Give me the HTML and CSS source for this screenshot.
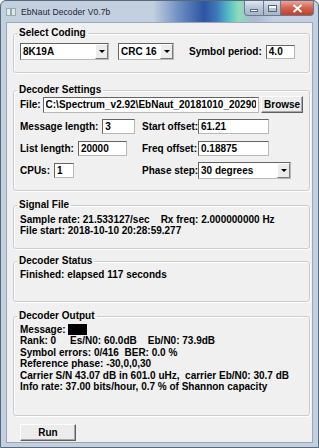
FILE: index.html
```html
<!DOCTYPE html>
<html lang="en">
<head>
    <meta charset="UTF-8">
    <title>EbNaut Decoder V0.7b</title>
    <link rel="stylesheet" href="styles.css">
</head>
<body>
    <div class="window">
        <div class="titlebar">
            <span class="app-icon"></span>
            <span class="title">EbNaut Decoder V0.7b</span>
            <div class="caption-buttons">
                <span class="cap cap-min"><span class="min-bar"></span></span>
                <span class="cap cap-max"><span class="max-box"></span></span>
                <span class="cap cap-close">
                    <svg width="11" height="9" viewBox="0 0 11 9">
                        <path d="M1.5 1 L9.5 8 M9.5 1 L1.5 8" stroke="#fff" stroke-width="2" fill="none"/>
                    </svg>
                </span>
            </div>
        </div>

        <div class="client">
            <fieldset class="group group-coding">
                <legend>Select Coding</legend>
                <div class="row">
                    <div class="combo combo-code"><span class="combo-text">8K19A</span><span class="combo-btn"></span></div>
                    <div class="combo combo-crc"><span class="combo-text">CRC 16</span><span class="combo-btn"></span></div>
                    <span class="label label-symbol">Symbol period:</span>
                    <input class="field field-symbol" type="text" value="4.0" readonly>
                </div>
            </fieldset>

            <fieldset class="group group-settings">
                <legend>Decoder Settings</legend>
                <div class="row">
                    <span class="label">File:</span>
                    <input class="field field-file" type="text" value="C:\Spectrum_v2.92\EbNaut_20181010_202900.vlf" readonly>
                    <button class="btn btn-browse">Browse</button>
                </div>
                <div class="row">
                    <div class="left-col">
                        <span class="label">Message length:</span>
                        <input class="field field-msg" type="text" value="3" readonly>
                    </div>
                    <span class="label right-label">Start offset:</span>
                    <input class="field field-right" type="text" value="61.21" readonly>
                </div>
                <div class="row">
                    <div class="left-col">
                        <span class="label">List length:</span>
                        <input class="field field-list" type="text" value="20000" readonly>
                    </div>
                    <span class="label right-label">Freq offset:</span>
                    <input class="field field-right" type="text" value="0.18875" readonly>
                </div>
                <div class="row">
                    <div class="left-col">
                        <span class="label">CPUs:</span>
                        <input class="field field-cpu" type="text" value="1" readonly>
                    </div>
                    <span class="label right-label">Phase step:</span>
                    <div class="combo combo-phase"><span class="combo-text">30 degrees</span><span class="combo-btn"></span></div>
                </div>
            </fieldset>

            <fieldset class="group group-signal">
                <legend>Signal File</legend>
                <div class="text-line">Sample rate: 21.533127/sec    Rx freq: 2.000000000 Hz</div>
                <div class="text-line">File start: 2018-10-10 20:28:59.277</div>
            </fieldset>

            <fieldset class="group group-status">
                <legend>Decoder Status</legend>
                <div class="text-line">Finished: elapsed 117 seconds</div>
            </fieldset>

            <fieldset class="group group-output">
                <legend>Decoder Output</legend>
                <div class="text-line">Message: <span class="redacted"></span></div>
                <div class="text-line">Rank: 0     Es/N0: 60.0dB    Eb/N0: 73.9dB</div>
                <div class="text-line">Symbol errors: 0/416  BER: 0.0 %</div>
                <div class="text-line">Reference phase: -30,0,0,30</div>
                <div class="text-line">Carrier S/N 43.07 dB in 601.0 uHz,  carrier Eb/N0: 30.7 dB</div>
                <div class="text-line">Info rate: 37.00 bits/hour, 0.7 % of Shannon capacity</div>
            </fieldset>

            <button class="btn btn-run">Run</button>
        </div>
    </div>
</body>
</html>
```

FILE: styles.css
```css
* {
    margin: 0;
    padding: 0;
    box-sizing: border-box;
}

body {
    width: 319px;
    height: 448px;
    overflow: hidden;
    background: #fff;
    font-family: "Liberation Sans", Arial, sans-serif;
    font-size: 10px;
    font-weight: bold;
    color: #000;
}

/* window frame */
.window {
    width: 319px;
    height: 448px;
    display: flex;
    flex-direction: column;
    padding: 0 5px 4px 5px;
    border: 1px solid #59687a;
    border-radius: 6px 6px 0 0;
    background:
        linear-gradient(90deg, rgba(205, 216, 230, 0) 0%, rgba(205, 216, 230, 0) 48%, #6f8fc2 56%, #2d55a3 64%, #3f78b8 68%, #55c0c8 72%, #8fdcb8 75%, #a9b8d3 80%, rgba(190, 205, 222, 0) 86%) top / 100% 22px no-repeat,
        #c2d0df;
}

.titlebar {
    height: 21px;
    display: flex;
    align-items: center;
    flex-shrink: 0;
}

.app-icon {
    width: 10px;
    height: 8px;
    margin-left: 0;
    margin-top: 1px;
    background: linear-gradient(90deg, #e4eef0 0%, #e4eef0 40%, #8db0a0 40%, #8db0a0 60%, #dce8e4 60%);
    border: 1px solid #9aa9b0;
}

.title {
    margin-left: 5px;
    margin-top: 1px;
    font-size: 8.5px;
    font-weight: normal;
    color: #1c2430;
    letter-spacing: 0.1px;
}

.caption-buttons {
    margin-left: auto;
    align-self: flex-start;
    display: flex;
    height: 15px;
    margin-right: -1px;
}

.cap {
    display: flex;
    align-items: center;
    justify-content: center;
    height: 15px;
    border: 1px solid #6a7890;
    border-top: none;
}

.cap-min {
    width: 20px;
    border-radius: 0 0 0 4px;
    background: linear-gradient(#dfe6f0, #b9c6d8 50%, #a7b6cc);
}

.cap-max {
    width: 17px;
    border-left: none;
    background: linear-gradient(#dfe6f0, #b9c6d8 50%, #a7b6cc);
}

.cap-close {
    width: 33px;
    border-left: none;
    border-radius: 0 0 4px 0;
    background: linear-gradient(#e8a89a, #d2624e 50%, #c2402c);
}

.min-bar {
    width: 8px;
    height: 3px;
    margin-top: 5px;
    background: #fff;
    border: 1px solid #5a6678;
}

.max-box {
    width: 9px;
    height: 7px;
    border: 1px solid #5a6678;
    box-shadow: inset 0 2px 0 #fff;
    background: transparent;
}

/* client area */
.client {
    flex: 1;
    display: flex;
    flex-direction: column;
    background: #f0f0f0;
    border: 1px solid #9aa8b8;
    padding: 4px 2px 0 6px;
}

.group {
    border: 1px solid #c9cdd1;
    border-radius: 3px;
    box-shadow: inset 1px 1px 0 #fff, 1px 1px 0 #fff;
    padding: 0 6px;
    min-width: 0;
}

.group legend {
    margin-left: -3px;
    padding: 0 2px;
    line-height: 12px;
}

.group-coding {
    height: 46px;
    padding-top: 4px;
}

.group-settings {
    height: 107px;
    margin-top: 11px;
    padding-top: 0;
}

.group-signal {
    height: 50px;
    margin-top: 8px;
    padding-top: 3px;
}

.group-status {
    height: 47px;
    margin-top: 6px;
    padding-top: 2px;
}

.group-output {
    height: 106px;
    margin-top: 8px;
    padding-top: 2px;
}

.row {
    display: flex;
    align-items: center;
    height: 17px;
    margin-bottom: 5px;
}

.left-col {
    width: 122px;
    display: flex;
    align-items: center;
    gap: 4px;
}

.label {
    white-space: nowrap;
}

.right-label {
    width: 56px;
}

.label-symbol {
    margin-left: 15px;
    margin-right: 4px;
}

/* text fields */
.field {
    height: 15px;
    padding: 0 2px;
    font: inherit;
    color: #000;
    background: #fff;
    border: 1px solid;
    border-color: #646464 #b8b8b8 #b8b8b8 #646464;
    outline: none;
}

.field-symbol {
    width: 29px;
    height: 14px;
}

.field-file {
    width: 218px;
    height: 16px;
    margin-left: 2px;
}

.field-msg {
    width: 33px;
}

.field-list {
    width: 49px;
}

.field-cpu {
    width: 20px;
}

.field-right {
    width: 71px;
}

/* drop-down lists */
.combo {
    height: 17px;
    display: flex;
    align-items: stretch;
    background: #fff;
    border: 1px solid;
    border-color: #646464 #b8b8b8 #b8b8b8 #646464;
}

.combo-text {
    flex: 1;
    padding-left: 2px;
    line-height: 15px;
    overflow: hidden;
    white-space: nowrap;
}

.combo-btn {
    width: 13px;
    display: flex;
    align-items: center;
    justify-content: center;
    background: #ececec;
    border: 1px solid;
    border-color: #fff #7a7a7a #7a7a7a #fff;
}

.combo-btn::after {
    content: "";
    border-left: 3px solid transparent;
    border-right: 3px solid transparent;
    border-top: 3px solid #000;
}

.combo-code {
    width: 89px;
}

.combo-crc {
    width: 56px;
    margin-left: 9px;
}

.combo-phase {
    width: 93px;
}

/* push buttons */
.btn {
    font: inherit;
    color: #000;
    background: #ececec;
    border: 1px solid;
    border-color: #fff #5f5f5f #5f5f5f #fff;
    box-shadow: inset -1px -1px 0 #a8a8a8;
}

.btn-browse {
    width: 42px;
    height: 17px;
    margin-left: 2px;
}

.btn-run {
    width: 56px;
    height: 17px;
    margin-top: 8px;
    margin-left: 7px;
}

/* text read-outs */
.text-line {
    white-space: pre;
    line-height: 11.4px;
    height: 11.4px;
}

.redacted {
    display: inline-block;
    width: 19px;
    height: 11px;
    background: #000;
    vertical-align: -2px;
}
```
